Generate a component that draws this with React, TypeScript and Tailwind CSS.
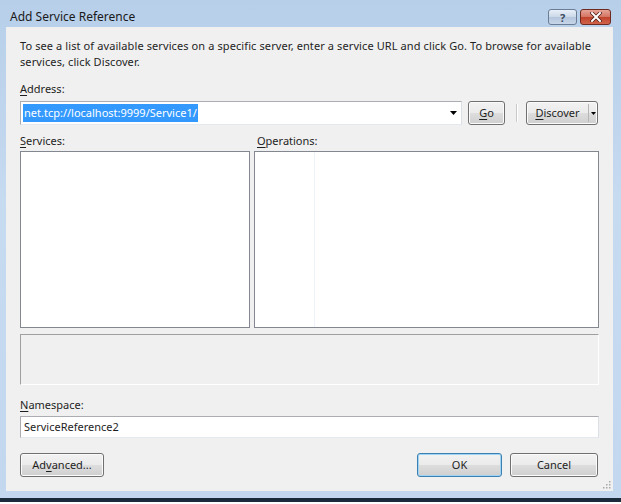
import { ReactNode } from "react"

const font = { fontFamily: '"Noto Sans", "Open Sans", sans-serif' }

const Btn = ({ children, className = "", primary = false }: { children: ReactNode; className?: string; primary?: boolean }) => (
    <div
        className={`h-[24px] rounded-[3px] border flex items-center justify-center text-[11px] text-[#1e1e1e] ${primary ? "border-[#3c7fb1] shadow-[inset_0_0_0_1px_#9fd4f5]" : "border-[#707070] shadow-[inset_0_0_0_1px_#fbfbfb]"} bg-[linear-gradient(#f2f2f2_0%,#ebebeb_48%,#dddddd_52%,#cfcfcf_100%)] ${className}`}
    >
        {children}
    </div>
)

const U = ({ children }: { children: ReactNode }) => <span className="underline underline-offset-2">{children}</span>

export default function App() {
    return (
        <div className="w-[621px] h-[504px] bg-white overflow-hidden" style={font}>
            <div className="h-[502px] flex flex-col bg-[linear-gradient(#b7cfe9,#c6daf0_40%,#c3d8ef)] border-b-[4px] border-[#1c2b3b] px-[6px] pr-[8px]">
                {/* title bar */}
                <div className="h-[27px] flex items-start shrink-0">
                    <span className="ml-[4px] mt-[9px] text-[12px] leading-[16px] text-[#1a1a1a]">Add Service Reference</span>
                    <div className="ml-auto mt-[9px] flex gap-[3px] mr-[2px]">
                        <div className="w-[29px] h-[16px] rounded-[3px] border border-[#6b7d95] bg-[linear-gradient(#e8eff8,#cbd8e8_50%,#b4c6dd_52%,#c7d6e8)] flex items-center justify-center text-[11px] font-bold leading-none text-[#3a4a5e]">?</div>
                        <div className="w-[31px] h-[16px] rounded-[3px] border border-[#6e2a1f] bg-[linear-gradient(#e6a497,#d47563_48%,#c2432c_52%,#d0634a)] flex items-center justify-center">
                            <svg width="12" height="10" viewBox="0 0 12 10">
                                <path d="M2 1 L10 9 M10 1 L2 9" stroke="#4a1a12" strokeWidth="3.4" strokeLinecap="square" />
                                <path d="M2 1 L10 9 M10 1 L2 9" stroke="#ffffff" strokeWidth="2" strokeLinecap="square" />
                            </svg>
                        </div>
                    </div>
                </div>

                {/* client area */}
                <div className="h-[464px] bg-[#f0f0f0] relative flex flex-col px-[14px] pt-[11px] text-[11px] text-[#1e1e1e] leading-[16px]">
                    <p className="w-[585px] tracking-[0.1px]">To see a list of available services on a specific server, enter a service URL and click Go. To browse for available services, click Discover.</p>

                    <div className="mt-[11px]"><U>A</U>ddress:</div>
                    <div className="mt-[4px] flex items-center">
                        <div className="w-[442px] h-[24px] bg-white border border-[#abadb3] border-r-[#dbdfe6] border-b-[#e3e9ef] flex items-center pl-[2px]">
                            <span className="bg-[#3399ff] text-white text-[11px] leading-[18px] px-[1px]">net.tcp://localhost:9999/Service1/</span>
                            <svg className="ml-auto mr-[4px]" width="7" height="4" viewBox="0 0 7 4"><path d="M0 0 H7 L3.5 4 Z" fill="#000" /></svg>
                        </div>
                        <Btn className="ml-[6px] w-[37px]"><span><U>G</U>o</span></Btn>
                        <div className="ml-[11px] w-px h-[18px] bg-[#c9c9c9] shadow-[1px_0_0_#ffffff]" />
                        <Btn className="ml-[9px] w-[72px] !justify-start">
                            <span className="w-[61px] text-center"><U>D</U>iscover</span>
                            <span className="w-px h-[18px] bg-[#b5b5b5]" />
                            <svg className="ml-[2px]" width="5" height="3" viewBox="0 0 5 3"><path d="M0 0 H5 L2.5 3 Z" fill="#000" /></svg>
                        </Btn>
                    </div>

                    <div className="mt-[8px] flex">
                        <div className="w-[234px]"><U>S</U>ervices:</div>
                        <div className="ml-[3px]"><U>O</U>perations:</div>
                    </div>
                    <div className="mt-[2px] flex gap-[4px] h-[177px]">
                        <div className="w-[230px] bg-white border border-[#828790]" />
                        <div className="flex-1 bg-white border border-[#828790] flex">
                            <div className="w-[60px] border-r border-[#eef3f9]" />
                        </div>
                    </div>

                    <div className="mt-[6px] h-[51px] border border-[#a0a0a0] border-r-white border-b-white bg-[#f0f0f0]" />

                    <div className="mt-[12px]"><U>N</U>amespace:</div>
                    <div className="mt-[3px] h-[22px] bg-white border border-[#abadb3] border-r-[#dbdfe6] border-b-[#e3e9ef] flex items-center pl-[3px]">ServiceReference2</div>

                    <div className="mt-[15px] flex">
                        <Btn className="w-[84px]"><span>Ad<U>v</U>anced...</span></Btn>
                        <Btn primary className="ml-auto w-[85px]">OK</Btn>
                        <Btn className="ml-[8px] w-[88px] mr-[1px]">Cancel</Btn>
                    </div>

                    <svg className="absolute right-[2px] bottom-[2px]" width="10" height="10" viewBox="0 0 10 10">
                        {[[8, 2], [8, 5], [8, 8], [5, 5], [5, 8], [2, 8]].map(([x, y], i) => (
                            <rect key={i} x={x} y={y} width="1.5" height="1.5" fill="#a8a8a8" />
                        ))}
                    </svg>
                </div>
            </div>
        </div>
    )
}
